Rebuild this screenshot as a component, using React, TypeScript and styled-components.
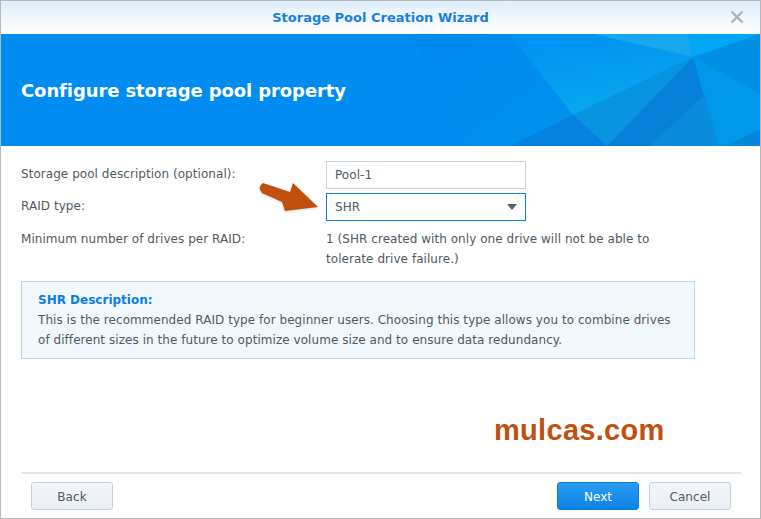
import React from "react";
import styled, { createGlobalStyle } from "styled-components";

const Global = createGlobalStyle`
  html, body { margin: 0; padding: 0; background: #fff; }
  * { box-sizing: border-box; }
`;

const Window = styled.div`
  position: relative;
  width: 761px;
  height: 519px;
  display: flex;
  flex-direction: column;
  background: #fff;
  border: 1px solid #b9b9b9;
  font-family: "DejaVu Sans", Verdana, sans-serif;
  font-size: 12px;
  letter-spacing: 0.05px;
  color: #505a64;
  overflow: hidden;
`;

const TitleBar = styled.div`
  position: relative;
  height: 33px;
  flex: none;
  display: flex;
  align-items: center;
  justify-content: center;
  background: linear-gradient(#deeefa, #ffffff);
  color: #1a7ee0;
  font-weight: 700;
  font-size: 13px;
  letter-spacing: 0;
  padding-bottom: 1px;
`;

const CloseIcon = styled.svg`
  position: absolute;
  right: 16px;
  top: 9px;
`;

const Banner = styled.div`
  position: relative;
  height: 112px;
  flex: none;
  display: flex;
  align-items: center;
  padding-left: 20px;
  background: #008cf0;
  overflow: hidden;
`;

const BannerArt = styled.svg`
  position: absolute;
  left: -1px;
  top: 0;
`;

const BannerTitle = styled.h1`
  position: relative;
  margin: 0;
  color: #fff;
  font-size: 18px;
  font-weight: 700;
  letter-spacing: -0.1px;
`;

const Content = styled.div`
  flex: 1;
  display: flex;
  flex-direction: column;
  padding: 15px 19px 0 20px;
`;

const FormRow = styled.div<{ $top?: boolean }>`
  display: grid;
  grid-template-columns: 305px 1fr;
  align-items: ${(p) => (p.$top ? "start" : "center")};
  margin-bottom: 4px;
  min-height: 28px;
  padding-top: ${(p) => (p.$top ? "4px" : "0")};
`;

const Label = styled.div<{ $flush?: boolean }>`
  line-height: 20px;
  margin-top: ${(p) => (p.$flush ? "0" : "-2px")};
`;

const Field = styled.div<{ $focus?: boolean }>`
  width: 200px;
  height: 28px;
  display: flex;
  align-items: center;
  justify-content: space-between;
  padding: 0 8px 0 8px;
  border: 1px solid ${(p) => (p.$focus ? "#0086e5" : "#c8d3de")};
  background: #fff;
`;

const Caret = styled.span`
  width: 0;
  height: 0;
  border-left: 5.5px solid transparent;
  border-right: 5.5px solid transparent;
  border-top: 6px solid #565f69;
`;

const ValueText = styled.div`
  line-height: 20px;
  max-width: 345px;
`;

const InfoBox = styled.div`
  width: 674px;
  height: 78px;
  margin-top: 8px;
  padding: 8px 16px;
  line-height: 20px;
  background: #f2f9fd;
  border: 1px solid #b2d6f4;
`;

const InfoTitle = styled.div`
  color: #0a7de8;
  font-weight: 700;
  letter-spacing: 0;
`;

const Spacer = styled.div`
  flex: 1;
`;

const Divider = styled.div`
  height: 2px;
  background: #e4e6e8;
`;

const Footer = styled.div`
  display: flex;
  align-items: center;
  justify-content: space-between;
  padding: 0 10px;
  height: 44px;
`;

const ButtonGroup = styled.div`
  display: flex;
  gap: 10px;
`;

const Button = styled.div<{ $primary?: boolean }>`
  width: 82px;
  height: 28px;
  display: flex;
  align-items: center;
  justify-content: center;
  border-radius: 3px;
  font-size: 12px;
  padding-top: 1px;
  color: ${(p) => (p.$primary ? "#fff" : "#505a64")};
  background: ${(p) =>
    p.$primary ? "linear-gradient(#2a9cf2, #0a84e6)" : "linear-gradient(#f2f6fb, #ebf0f6)"};
  border: 1px solid ${(p) => (p.$primary ? "#0d7fd8" : "#c5d2e0")};
`;

const Watermark = styled.div`
  position: absolute;
  left: 493px;
  top: 412px;
  color: #c1500f;
  font-family: "Liberation Sans", Arial, sans-serif;
  font-size: 29px;
  font-weight: 700;
  line-height: 34px;
  letter-spacing: 0.3px;
`;

const Arrow = styled.svg`
  position: absolute;
  left: 254px;
  top: 177px;
  overflow: visible;
`;

const ARROW = "M8 5 L35 14 L38 5 L63 29 L30 33 L27 24 L7 15 Q2 9 8 5 Z";

export default function App() {
  return (
    <>
      <Global />
      <Window>
        <TitleBar>
          Storage Pool Creation Wizard
          <CloseIcon width="14" height="14" viewBox="0 0 14 14">
            <path d="M1.5 1.5 L12.5 12.5 M12.5 1.5 L1.5 12.5" stroke="#a9b1b9" strokeWidth="2.2" fill="none" />
          </CloseIcon>
        </TitleBar>
        <Banner>
          <BannerArt width="761" height="112" viewBox="0 0 761 112">
            <defs>
              <linearGradient id="glow" x1="0.35" y1="0" x2="0.62" y2="0.85">
                <stop offset="0" stopColor="#0092f2" />
                <stop offset="1" stopColor="#08a6ee" />
              </linearGradient>
              <linearGradient id="wedge" x1="0" y1="0" x2="1" y2="1">
                <stop offset="0" stopColor="#0088ee" />
                <stop offset="1" stopColor="#0092ee" />
              </linearGradient>
            </defs>
            <polygon points="413,0 513,0 573,81 510,112 468,112" fill="url(#wedge)" />
            <polygon points="510,0 593,0 693,23 573,81" fill="url(#glow)" />
            <polygon points="593,0 688,0 693,23" fill="#17a7ee" />
            <polygon points="688,0 761,0 693,23" fill="#00a8f7" />
            <polygon points="693,23 761,0 761,60" fill="#0090e2" />
            <polygon points="693,23 761,60 761,112 718,112" fill="#0098e8" />
            <polygon points="693,23 718,112 607,112" fill="#0680d8" />
            <polygon points="693,23 607,112 573,81" fill="#0894e0" />
            <polygon points="573,81 607,112 510,112" fill="#0582df" />
            <polygon points="650,112 718,112 705,60" fill="#0a8bdc" />
            <polygon points="761,95 761,112 725,112" fill="#0585d8" />
          </BannerArt>
          <BannerTitle>Configure storage pool property</BannerTitle>
        </Banner>
        <Content>
          <FormRow>
            <Label>Storage pool description (optional):</Label>
            <Field>Pool-1</Field>
          </FormRow>
          <FormRow>
            <Label>RAID type:</Label>
            <Field $focus>
              SHR
              <Caret />
            </Field>
          </FormRow>
          <FormRow $top>
            <Label $flush>Minimum number of drives per RAID:</Label>
            <ValueText>1 (SHR created with only one drive will not be able to tolerate drive failure.)</ValueText>
          </FormRow>
          <InfoBox>
            <InfoTitle>SHR Description:</InfoTitle>
            This is the recommended RAID type for beginner users. Choosing this type allows you to combine drives of different sizes in the future to optimize volume size and to ensure data redundancy.
          </InfoBox>
          <Spacer />
          <Divider />
          <Footer>
            <Button>Back</Button>
            <ButtonGroup>
              <Button $primary>Next</Button>
              <Button>Cancel</Button>
            </ButtonGroup>
          </Footer>
        </Content>
        <Watermark>mulcas.com</Watermark>
        <Arrow width="66" height="36" viewBox="0 0 66 36">
          <defs>
            <filter id="arrowShadow" x="-20%" y="-30%" width="140%" height="160%">
              <feGaussianBlur stdDeviation="1.5" />
            </filter>
          </defs>
          <path d={ARROW} fill="#8a8a8a" opacity="0.35" filter="url(#arrowShadow)" transform="translate(0 1)" />
          <path d={ARROW} fill="#c1500f" />
        </Arrow>
      </Window>
    </>
  );
}
